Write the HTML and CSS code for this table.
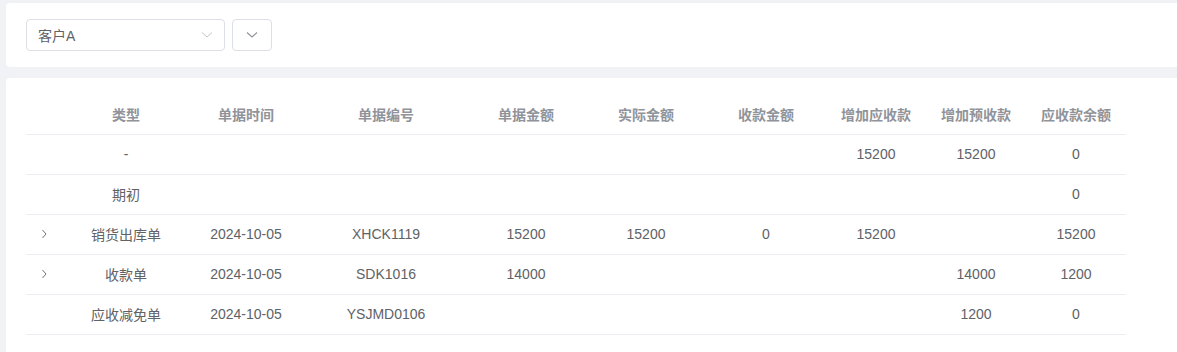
FILE: index.html
```html
<!DOCTYPE html>
<html lang="zh">
<head>
<meta charset="utf-8">
<link rel="stylesheet" href="styles.css">
</head>
<body>
<div class="page">
  <div class="card filter">
    <div class="select">
      <span class="select-text">客户A</span>
      <svg class="chev" width="12" height="8" viewBox="0 0 12 8"><path d="M1 1.5 L6 6 L11 1.5" fill="none" stroke="#c0c4cc" stroke-width="1"/></svg>
    </div>
    <div class="btn">
      <svg class="chev" width="12" height="8" viewBox="0 0 12 8"><path d="M1 1.5 L6 6 L11 1.5" fill="none" stroke="#909399" stroke-width="1.1"/></svg>
    </div>
  </div>
  <div class="card tablecard">
    <table class="tbl">
      <colgroup>
        <col class="c-exp"><col class="c120"><col class="c120"><col class="c160"><col class="c120"><col class="c120"><col class="c120"><col class="c100"><col class="c100"><col class="c100">
      </colgroup>
      <thead>
        <tr><th></th><th>类型</th><th>单据时间</th><th>单据编号</th><th>单据金额</th><th>实际金额</th><th>收款金额</th><th>增加应收款</th><th>增加预收款</th><th>应收款余额</th></tr>
      </thead>
      <tbody>
        <tr><td></td><td>-</td><td></td><td></td><td></td><td></td><td></td><td>15200</td><td>15200</td><td>0</td></tr>
        <tr><td></td><td>期初</td><td></td><td></td><td></td><td></td><td></td><td></td><td></td><td>0</td></tr>
        <tr><td class="exp"><svg width="8" height="12" viewBox="0 0 8 12"><path d="M2.5 2 L6 6 L2.5 10" fill="none" stroke="#707378" stroke-width="1"/></svg></td><td>销货出库单</td><td>2024-10-05</td><td>XHCK1119</td><td>15200</td><td>15200</td><td>0</td><td>15200</td><td></td><td>15200</td></tr>
        <tr><td class="exp"><svg width="8" height="12" viewBox="0 0 8 12"><path d="M2.5 2 L6 6 L2.5 10" fill="none" stroke="#707378" stroke-width="1"/></svg></td><td>收款单</td><td>2024-10-05</td><td>SDK1016</td><td>14000</td><td></td><td></td><td></td><td>14000</td><td>1200</td></tr>
        <tr><td></td><td>应收减免单</td><td>2024-10-05</td><td>YSJMD0106</td><td></td><td></td><td></td><td></td><td>1200</td><td>0</td></tr>
      </tbody>
    </table>
  </div>
</div>
</body>
</html>
```
FILE: styles.css
```css
html, body {
  margin: 0;
  padding: 0;
  background: #f0f2f5;
  font-family: "Liberation Sans", "Noto Sans CJK SC", sans-serif;
  font-size: 14px;
  color: #606266;
}
.page {
  padding: 3px 0 0 6px;
  display: flex;
  flex-direction: column;
  gap: 11px;
}
.card {
  background: #fff;
  border-radius: 4px 0 0 4px;
}
.filter {
  display: flex;
  align-items: center;
  gap: 7px;
  padding: 16px 20px;
}
.select {
  box-sizing: border-box;
  width: 199px;
  height: 32px;
  border: 1px solid #dcdfe6;
  border-radius: 4px;
  display: flex;
  align-items: center;
  justify-content: space-between;
  padding: 0 11px 0 11px;
}
.select-text {
  color: #606266;
  font-size: 14px;
}
.btn {
  box-sizing: border-box;
  width: 40px;
  height: 32px;
  border: 1px solid #dcdfe6;
  border-radius: 4px;
  display: flex;
  align-items: center;
  justify-content: center;
}
.tablecard {
  padding: 16px 20px 30px 20px;
}
.tbl {
  border-collapse: collapse;
  table-layout: fixed;
  width: 1100px;
}
.c-exp { width: 40px; }
.c120 { width: 120px; }
.c160 { width: 160px; }
.c100 { width: 100px; }
.tbl th {
  height: 40px;
  padding: 0;
  font-weight: bold;
  color: #909399;
  text-align: center;
  border-bottom: 1px solid #ebeef5;
  box-sizing: border-box;
}
.tbl td {
  height: 40px;
  padding: 0;
  text-align: center;
  color: #606266;
  border-bottom: 1px solid #ebeef5;
  box-sizing: border-box;
}
.tbl td.exp {
  text-align: left;
  padding-left: 14px;
}
.tbl td.exp svg { display: block; }
```
